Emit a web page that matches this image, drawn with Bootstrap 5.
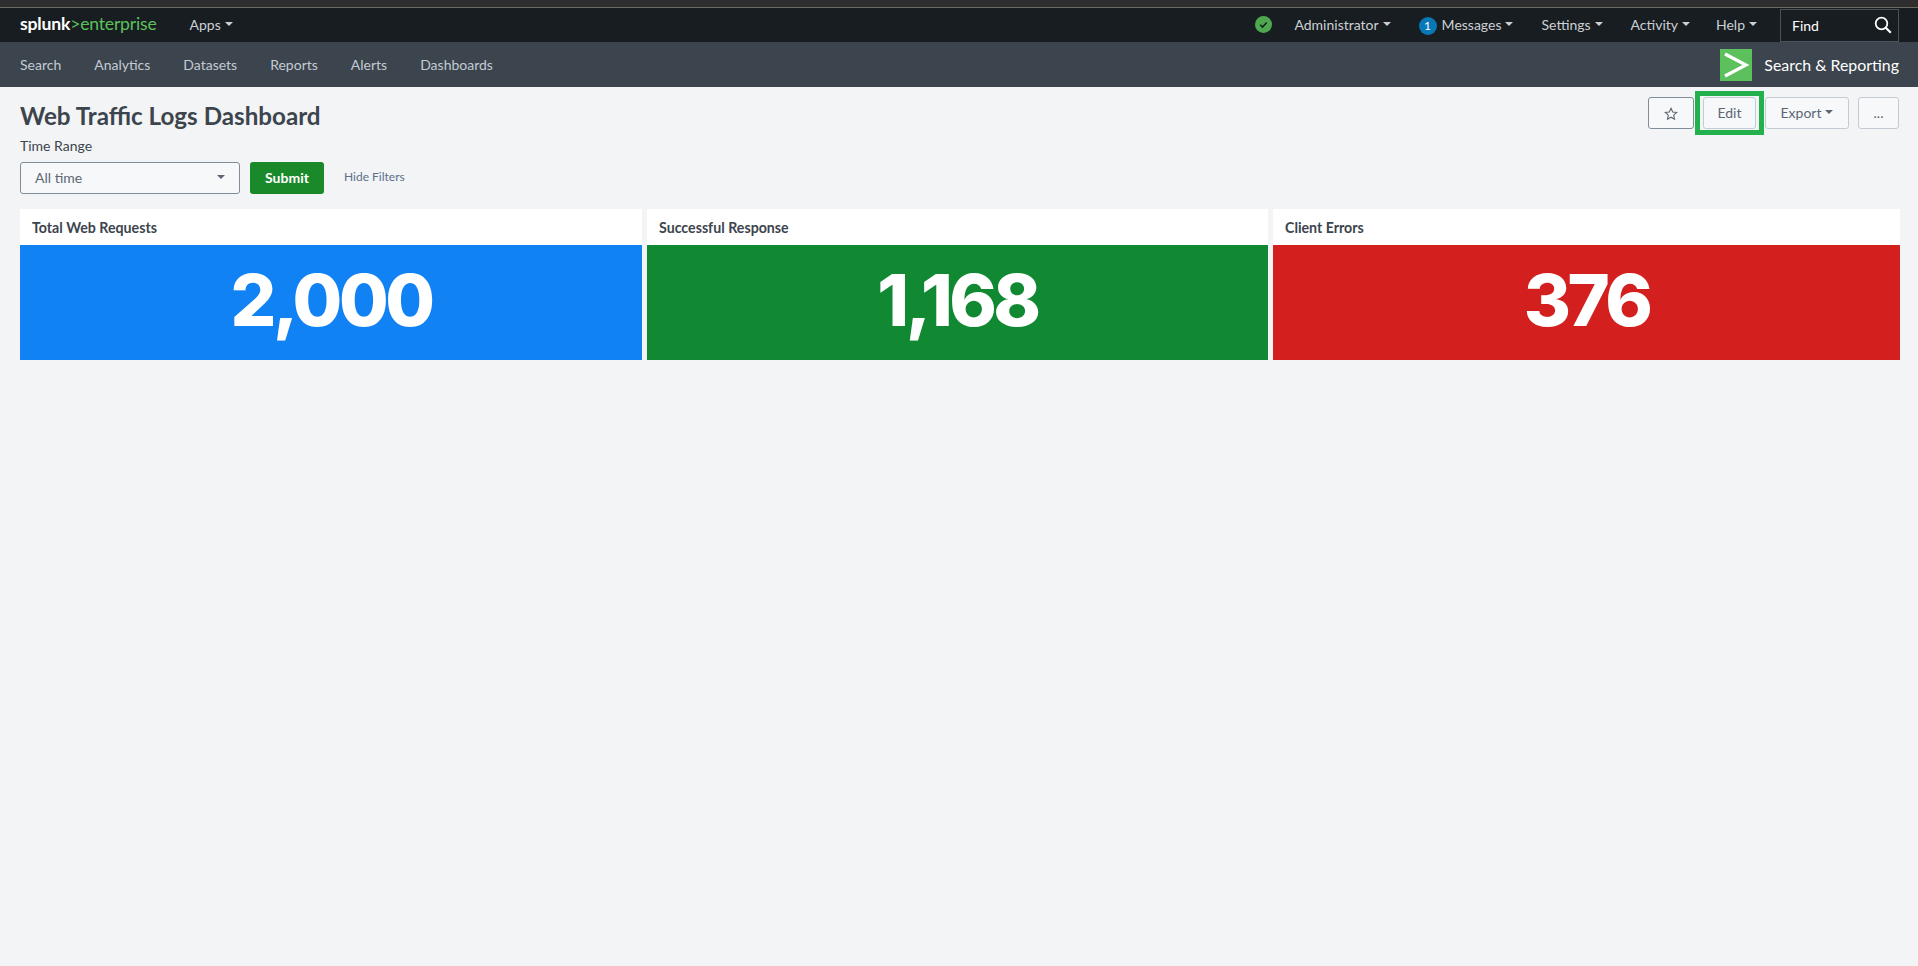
<!DOCTYPE html>
<html lang="en">
<head>
    <meta charset="UTF-8">
    <meta name="viewport" content="width=device-width, initial-scale=1.0">
    <title>Web Traffic Logs Dashboard</title>
    <link href="https://cdn.jsdelivr.net/npm/bootstrap@5.3.0/dist/css/bootstrap.min.css" rel="stylesheet">
    <style>
        html, body {
            height: 100%;
        }
        body {
            background-color: #f2f4f5;
            font-family: Lato, "Liberation Sans", sans-serif;
            font-size: 14px;
            color: #3c444d;
        }
        .dropdown-toggle::after {
            margin-left: 4px;
            border-top-width: 4px;
            border-left-width: 4px;
            border-right-width: 4px;
        }
        .top-strip {
            height: 8px;
            background-color: #2e2e2e;
            border-bottom: 1px solid #6b6b63;
        }
        .main-bar {
            height: 34px;
            background-color: #171d21;
            padding: 0 19px 2px 20px;
        }
        .brand-logo {
            font-size: 17.6px;
            line-height: 1;
            color: #5cc05c;
            letter-spacing: -0.2px;
            text-decoration: none;
            margin-right: 33px;
        }
        .brand-logo b {
            color: #fff;
            font-weight: 700;
        }
        .main-link {
            color: #ccd0d4;
            text-decoration: none;
            white-space: nowrap;
        }
        .right-links {
            gap: 28px;
        }
        .help-link {
            margin-left: -2px;
        }
        .status-ok {
            width: 17px;
            height: 17px;
            margin-right: -6px;
        }
        .msg-count {
            display: inline-block;
            width: 18px;
            height: 18px;
            line-height: 18px;
            border-radius: 50%;
            background-color: #0877b8;
            color: #fff;
            font-size: 12px;
            text-align: center;
            margin-right: 5px;
        }
        .find-box {
            width: 119px;
            height: 33px;
            margin: 2px 0 0 -5px;
            border: 1px solid #4a535c;
            padding: 0 5px 0 11px;
            color: #fff;
        }
        .sub-bar {
            height: 45px;
            background-color: #3c444d;
            padding: 0 19px 0 20px;
        }
        .sub-links {
            gap: 33px;
        }
        .sub-link {
            color: #c3cbd4;
            text-decoration: none;
        }
        .app-mark {
            width: 32px;
            height: 32px;
            margin-right: 12px;
        }
        .app-name {
            color: #fff;
            font-size: 15.9px;
        }
        .page-head {
            padding: 4px 19px 0 20px;
        }
        .page-title {
            font-size: 24.2px;
            font-weight: 700;
            line-height: 30px;
            margin: 10px 0 0;
            color: #3c444d;
        }
        .range-label {
            font-size: 14px;
            line-height: 18px;
            margin-top: 6px;
        }
        .range-row {
            height: 32px;
            margin-top: 7px;
        }
        .range-select {
            width: 220px;
            height: 32px;
            padding: 0 14px 2px;
            font-size: 14px;
            color: #5c6773;
            background-color: #f7f8fa;
            border: 1px solid #818d99;
            border-radius: 3px;
        }
        .range-select:hover {
            background-color: #f7f8fa;
            color: #5c6773;
            border-color: #818d99;
        }
        .submit-btn {
            width: 74px;
            height: 32px;
            margin-left: 10px;
            padding: 0 0 2px;
            font-size: 14px;
            font-weight: 700;
            color: #fff;
            background-color: #1a8929;
            border: 0;
            border-radius: 3px;
        }
        .hide-link {
            margin-left: 20px;
            padding-bottom: 2px;
            font-size: 12px;
            color: #5a6f8c;
            text-decoration: none;
        }
        .head-actions {
            height: 44px;
        }
        .head-btn {
            height: 32px;
            padding: 0 0 2px;
            font-size: 14px;
            color: #5c6773;
            background-color: #f7f8fa;
            border: 1px solid #c3cbd4;
            border-radius: 3px;
        }
        .star-btn {
            width: 46px;
            border-color: #818d99;
        }
        .edit-mark {
            border: 5px solid #22b14c;
            padding: 1px 3px;
            margin: 0 1px;
        }
        .edit-btn {
            width: 53px;
        }
        .export-btn {
            width: 84px;
        }
        .more-btn {
            width: 41px;
            margin-left: 9px;
        }
        .panel-grid {
            display: grid;
            grid-template-columns: 622fr 621fr 627fr;
            gap: 5px;
            padding: 15px 18px 0 20px;
        }
        .panel-box {
            background-color: #fff;
        }
        .panel-title {
            height: 36px;
            padding-left: 12px;
            font-size: 14.2px;
            font-weight: 700;
            line-height: 38px;
        }
        .panel-value {
            height: 115px;
            line-height: 110px;
            color: #fff;
            font-family: Inter, Lato, sans-serif;
            font-size: 72px;
            font-weight: 800;
            text-align: center;
            letter-spacing: -3.5px;
        }
        .value-blue { background-color: #1182f3; }
        .value-green { background-color: #118832; }
        .value-red { background-color: #d41f1f; }
    </style>
</head>
<body>
    <div class="top-strip"></div>

    <nav class="main-bar d-flex align-items-center">
        <a class="brand-logo" href="#"><b>splunk</b>&gt;enterprise</a>
        <a class="main-link dropdown-toggle" href="#">Apps</a>
        <div class="right-links d-flex align-items-center ms-auto">
            <svg class="status-ok" viewBox="0 0 17 17">
                <circle cx="8.5" cy="8.5" r="8.5" fill="#4fa84f"/>
                <path d="M5.2 8.8l2.3 2.3 4.2-4.6" fill="none" stroke="#12231a" stroke-width="1.5"/>
            </svg>
            <a class="main-link dropdown-toggle" href="#">Administrator</a>
            <a class="main-link dropdown-toggle" href="#"><span class="msg-count">1</span>Messages</a>
            <a class="main-link dropdown-toggle" href="#">Settings</a>
            <a class="main-link dropdown-toggle" href="#">Activity</a>
            <a class="main-link dropdown-toggle help-link" href="#">Help</a>
            <div class="find-box d-flex align-items-center justify-content-between">
                <span>Find</span>
                <svg width="20" height="20" viewBox="0 0 20 20">
                    <circle cx="8.5" cy="8.5" r="5.8" fill="none" stroke="#fff" stroke-width="1.8"/>
                    <path d="M12.8 12.8l5 5" stroke="#fff" stroke-width="2.2"/>
                </svg>
            </div>
        </div>
    </nav>

    <nav class="sub-bar d-flex align-items-center">
        <div class="sub-links d-flex">
            <a class="sub-link" href="#">Search</a>
            <a class="sub-link" href="#">Analytics</a>
            <a class="sub-link" href="#">Datasets</a>
            <a class="sub-link" href="#">Reports</a>
            <a class="sub-link" href="#">Alerts</a>
            <a class="sub-link" href="#">Dashboards</a>
        </div>
        <div class="d-flex align-items-center ms-auto">
            <svg class="app-mark" viewBox="0 0 32 32">
                <rect width="32" height="32" fill="#5cc05c"/>
                <path d="M5 5l21 11L5 27" fill="none" stroke="#fff" stroke-width="3.2"/>
            </svg>
            <span class="app-name">Search &amp; Reporting</span>
        </div>
    </nav>

    <div class="page-head d-flex justify-content-between align-items-start">
        <div>
            <h1 class="page-title">Web Traffic Logs Dashboard</h1>
            <div class="range-label">Time Range</div>
            <div class="range-row d-flex align-items-center">
                <button class="btn range-select dropdown-toggle d-flex align-items-center justify-content-between" type="button">All time</button>
                <button class="btn submit-btn" type="button">Submit</button>
                <a class="hide-link" href="#">Hide Filters</a>
            </div>
        </div>
        <div class="head-actions d-flex align-items-center">
            <button class="btn head-btn star-btn" type="button">
                <svg width="14" height="14" viewBox="0 0 14 14">
                    <path d="M7 1.3l1.7 3.7 4 .5-3 2.7.8 4L7 10.2l-3.5 2 .8-4-3-2.7 4-.5z" fill="none" stroke="#5c6773" stroke-width="1.1"/>
                </svg>
            </button>
            <div class="edit-mark">
                <button class="btn head-btn edit-btn" type="button">Edit</button>
            </div>
            <button class="btn head-btn export-btn dropdown-toggle" type="button">Export</button>
            <button class="btn head-btn more-btn" type="button">...</button>
        </div>
    </div>

    <div class="panel-grid">
        <div class="panel-box">
            <div class="panel-title">Total Web Requests</div>
            <div class="panel-value value-blue">2,000</div>
        </div>
        <div class="panel-box">
            <div class="panel-title">Successful Response</div>
            <div class="panel-value value-green">1,168</div>
        </div>
        <div class="panel-box">
            <div class="panel-title">Client Errors</div>
            <div class="panel-value value-red">376</div>
        </div>
    </div>

    <script src="https://cdn.jsdelivr.net/npm/bootstrap@5.3.0/dist/js/bootstrap.bundle.min.js"></script>
</body>
</html>
